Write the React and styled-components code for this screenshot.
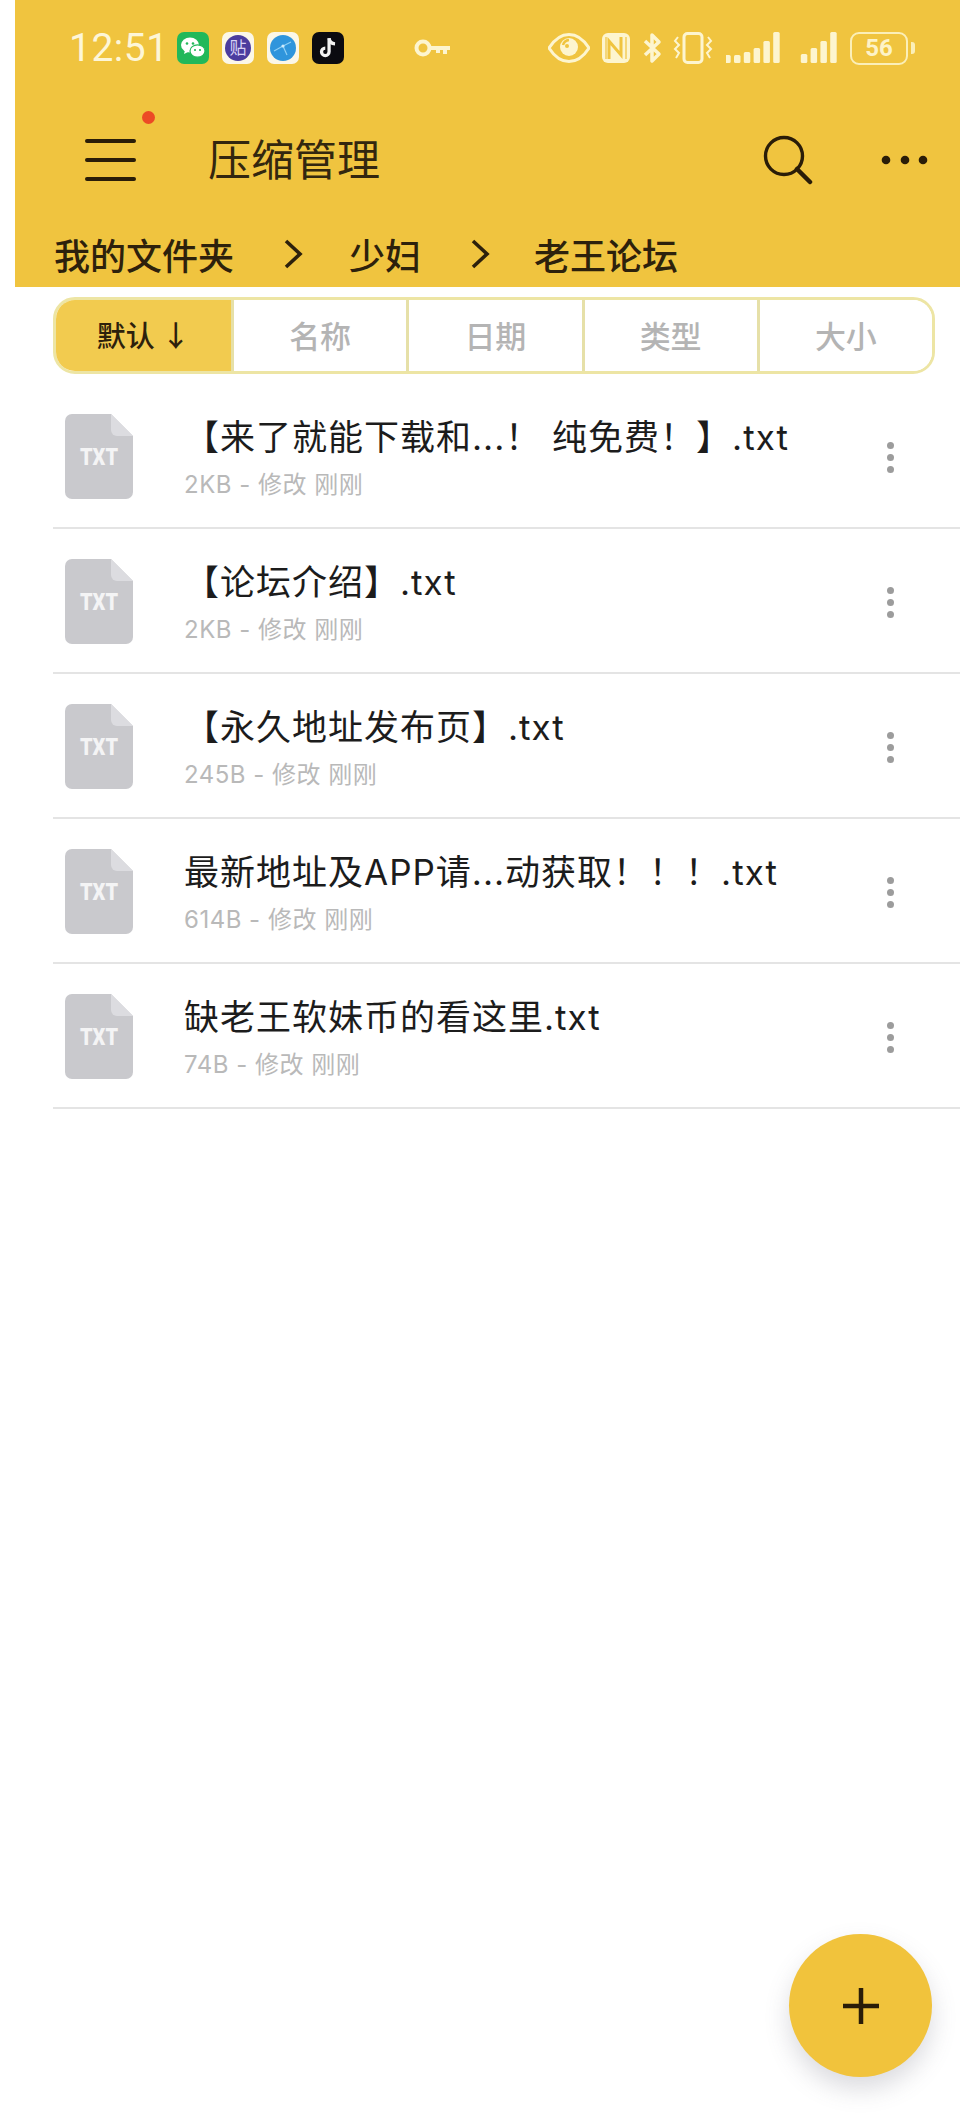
import React from "react";
import styled, { createGlobalStyle } from "styled-components";

const Y = "#F0C43F";
const CJK = `"Noto Sans CJK SC", "Noto Sans", sans-serif`;
const MIX = `"Inter", "Noto Sans CJK SC", sans-serif`;

const Global = createGlobalStyle`
  html, body { margin: 0; padding: 0; background: #fff; }
  body { font-family: ${CJK}; }
`;

const Page = styled.div`
  position: relative;
  width: 960px;
  height: 2118px;
  overflow: hidden;
  background: #fff;
`;
const Header = styled.header`
  margin-left: 15px;
  height: 287px;
  background: ${Y};
  display: flex;
  flex-direction: column;
`;
const StatusBar = styled.div`
  height: 96px;
  display: flex;
  align-items: center;
  padding-left: 54px;
  color: #fff8dc;
`;
const Time = styled.span`
  font: 400 39px/1 "Roboto", sans-serif;
  letter-spacing: 0.5px;
  width: 108px;
  flex: none;
  color: #fdf6d8;
`;
const AppIcons = styled.div`
  display: flex;
  align-items: center;
  gap: 13px;
  width: 371px;
  flex: none;
`;
const AppIconBox = styled.div`
  width: 32px;
  height: 32px;
  flex: none;
  border-radius: 7px;
  background: ${p => p.$bg};
  display: flex;
  align-items: center;
  justify-content: center;
  overflow: hidden;
`;
const Sys = styled.div`
  display: flex;
  align-items: center;
  flex: none;
  margin-left: ${p => p.$ml}px;
`;
const BatteryBody = styled.div`
  margin-left: 12px;
  width: 58px;
  height: 33px;
  flex: none;
  box-sizing: border-box;
  border: 2px solid #fbeFB8;
  border-radius: 9px;
  display: flex;
  align-items: center;
  justify-content: center;
  font: 700 24px/1 "Roboto", sans-serif;
  color: #fdf3c8;
`;
const BatteryNub = styled.div`
  width: 4px;
  height: 12px;
  margin-left: 3px;
  flex: none;
  border-radius: 0 3px 3px 0;
  background: #fbeFB8;
`;
const Toolbar = styled.div`
  height: 128px;
  display: flex;
  align-items: center;
  padding-left: 70px;
`;
const Menu = styled.div`
  position: relative;
  width: 51px;
  height: 42px;
  display: flex;
  flex-direction: column;
  justify-content: space-between;
`;
const MenuLine = styled.span`
  display: block;
  height: 4px;
  border-radius: 2px;
  background: #2a1d08;
`;
const RedDot = styled.span`
  position: absolute;
  left: 57px;
  top: -28px;
  width: 13px;
  height: 13px;
  border-radius: 50%;
  background: #EC4A25;
`;
const Title = styled.h1`
  margin: -5px 0 0 72px;
  font: 400 43px/1 ${CJK};
  color: #33270f;
  flex: 1;
`;
const ToolIcons = styled.div`
  display: flex;
  align-items: center;
  padding-right: 31px;
  gap: 68px;
`;
const Crumbs = styled.nav`
  display: flex;
  align-items: center;
  height: 61px;
  padding: 0 0 2px 39px;
  box-sizing: border-box;
`;
const Crumb = styled.span`
  font: 500 36px/1 ${CJK};
  color: #2d210c;
`;
const Chevron = styled.svg`
  width: 20px;
  height: 32px;
  margin: 0 ${p => p.$mr}px 0 ${p => p.$ml}px;
`;
const Tabs = styled.div`
  margin: 10px 25px 0 53px;
  height: 77px;
  box-sizing: border-box;
  border: 3px solid #EDE5A4;
  border-radius: 22px;
  display: grid;
  grid-template-columns: 175px 1fr 1fr 1fr 1fr;
  overflow: hidden;
`;
const Tab = styled.div`
  display: flex;
  align-items: center;
  justify-content: center;
  padding-bottom: 3px;
  font: 500 ${p => (p.$active ? 29 : 31)}px/1 ${CJK};
  color: ${p => (p.$active ? "#2d210c" : "#b4b4b4")};
  background: ${p => (p.$active ? "#F2CB4F" : "#fff")};
  border-left: ${p => (p.$first ? "none" : "3px solid #E6E0A8")};
`;
const List = styled.ul`
  list-style: none;
  margin: 10px 0 0 53px;
  padding: 0;
`;
const Row = styled.li`
  height: 145px;
  box-sizing: border-box;
  border-bottom: 2px solid #e4e4e4;
  padding: 30px 66px 0 12px;
  display: flex;
  align-items: flex-start;
`;
const FileSvg = styled.svg`
  width: 68px;
  height: 86px;
  flex: none;
`;
const Info = styled.div`
  margin: 0 0 0 51px;
  flex: 1;
  min-width: 0;
`;
const Name = styled.div`
  font: 400 35px/46px ${MIX};
  letter-spacing: 1px;
  color: #1c1c1c;
  white-space: nowrap;
`;
const Meta = styled.div`
  margin-top: 7px;
  font: 400 24px/36px ${MIX};
  letter-spacing: 0.5px;
  color: #b9b9b9;
  white-space: nowrap;
`;
const More = styled.div`
  margin-top: 28px;
  display: flex;
  flex-direction: column;
  gap: 5px;
`;
const MoreDot = styled.span`
  width: 7px;
  height: 7px;
  border-radius: 50%;
  background: #9c9c9c;
`;
const Fab = styled.button`
  position: absolute;
  left: 789px;
  top: 1934px;
  width: 143px;
  height: 143px;
  border: none;
  padding: 0;
  border-radius: 50%;
  background: #F1C33C;
  box-shadow: 0 12px 24px rgba(90, 90, 110, 0.22);
  display: flex;
  align-items: center;
  justify-content: center;
`;

const files = [
  ["【来了就能下载和...！ 纯免费！】.txt", "2KB - 修改 刚刚"],
  ["【论坛介绍】.txt", "2KB - 修改 刚刚"],
  ["【永久地址发布页】.txt", "245B - 修改 刚刚"],
  ["最新地址及APP请...动获取！！！.txt", "614B - 修改 刚刚"],
  ["缺老王软妹币的看这里.txt", "74B - 修改 刚刚"],
];
const tabs = ["默认 ↓", "名称", "日期", "类型", "大小"];

const W = "#fdf5cf";

const FileIcon = () => (
  <FileSvg viewBox="0 0 68 86">
    <path d="M7 0H46L68 22V78a7 7 0 0 1-7 7H7a7 7 0 0 1-7-7V7a7 7 0 0 1 7-7Z" fill="#c9c9cd" />
    <path d="M46 0L68 22H52a6 6 0 0 1-6-6Z" fill="#dcdce0" />
    <text x="34" y="51" textAnchor="middle" fontFamily="Roboto, sans-serif" fontWeight="900" fontSize="23" fill="#f4f4f5" textLength="38" lengthAdjust="spacingAndGlyphs">TXT</text>
  </FileSvg>
);

const Wechat = () => (
  <svg width="28" height="28" viewBox="0 0 28 28">
    <ellipse cx="11" cy="11" rx="9" ry="7.5" fill="#fff" />
    <path d="M6 16l-1 4 5-2.5Z" fill="#fff" />
    <ellipse cx="18.5" cy="17" rx="7.5" ry="6.2" fill="#fff" stroke="#22B85A" strokeWidth="1.2" />
    <circle cx="8" cy="9.5" r="1.3" fill="#22B85A" />
    <circle cx="14" cy="9.5" r="1.3" fill="#22B85A" />
    <circle cx="16" cy="16" r="1.1" fill="#22B85A" />
    <circle cx="21" cy="16" r="1.1" fill="#22B85A" />
  </svg>
);
const Tie = () => (
  <svg width="30" height="30" viewBox="0 0 30 30">
    <circle cx="15" cy="15" r="13" fill="#4B3C9E" />
    <text x="15" y="21" textAnchor="middle" fontSize="17" fontFamily={CJK} fill="#d9d2f5">贴</text>
  </svg>
);
const Globe = () => (
  <svg width="30" height="30" viewBox="0 0 30 30">
    <circle cx="15" cy="15" r="13" fill="#2F95DC" />
    <path d="M6 18L15 13L23 9M15 13L19 22" stroke="#8fd0f5" strokeWidth="1.2" fill="none" />
    <circle cx="15" cy="13" r="1.6" fill="#cdeafb" />
  </svg>
);
const Tiktok = () => (
  <svg width="26" height="26" viewBox="0 0 24 24">
    <path d="M13 3v12.5a3.5 3.5 0 1 1-3.5-3.5" fill="none" stroke="#f2f2f2" strokeWidth="3" />
    <path d="M13 3c.4 3 2.5 5 5.5 5.2" fill="none" stroke="#f2f2f2" strokeWidth="3" />
  </svg>
);
const Key = () => (
  <svg width="37" height="22" viewBox="0 0 37 22">
    <circle cx="9" cy="11" r="6.5" fill="none" stroke={W} strokeWidth="4" />
    <path d="M15 9H36V13H33V17H29V13H26V16H22V13H15Z" fill={W} />
  </svg>
);
const Eye = () => (
  <svg width="42" height="30" viewBox="0 0 42 30">
    <path d="M1 15C8 4 15 1.500 21 1.500S34 4 41 15C34 26 27 28.500 21 28.500S8 26 1 15Z" fill="none" stroke={W} strokeWidth="3" />
    <circle cx="21" cy="14" r="9" fill={W} />
    <path d="M15 12a7 7 0 0 1 6-5" stroke={Y} strokeWidth="2.500" fill="none" />
    <circle cx="19" cy="13" r="2" fill={Y} />
  </svg>
);
const Nfc = () => (
  <svg width="30" height="32" viewBox="0 0 30 32">
    <path d="M7 1H23a6 6 0 0 1 6 6V25a6 6 0 0 1-6 6H7a6 6 0 0 1-6-6V7a6 6 0 0 1 6-6Z" fill={W} />
    <path d="M8 27V9L20 23V5" fill="none" stroke={Y} strokeWidth="3" />
    <path d="M5 5V27M25 5V27" stroke={Y} strokeWidth="1.200" />
  </svg>
);
const Bluetooth = () => (
  <svg width="22" height="32" viewBox="0 0 22 32">
    <path d="M3 9L17 22L10 29V3L17 10L3 23" fill="none" stroke={W} strokeWidth="3.500" strokeLinejoin="round" />
  </svg>
);
const Vibrate = () => (
  <svg width="40" height="32" viewBox="0 0 40 32">
    <rect x="11" y="1.500" width="18" height="29" rx="3.500" fill="none" stroke={W} strokeWidth="3" />
    <path d="M5 5L2 9L6 13L2 17L6 21L3 26M35 5L38 9L34 13L38 17L34 21L37 26" fill="none" stroke={W} strokeWidth="2" />
  </svg>
);
const Signal = ({ hs, w }) => (
  <svg width={w} height="32" viewBox={`0 0 ${w} 32`}>
    {hs.map((h, i) => (
      <rect key={i} x={w - (hs.length - i) * 9.800 + 2} y={31 - h} width="6.500" height={h} rx="1.500" fill={W} />
    ))}
  </svg>
);
const Search = () => (
  <svg width="50" height="50" viewBox="0 0 50 50">
    <circle cx="21" cy="21" r="18.500" fill="none" stroke="#2a1d08" strokeWidth="3.400" />
    <path d="M34 34L47 47" stroke="#2a1d08" strokeWidth="4.500" strokeLinecap="round" />
  </svg>
);
const Dots = () => (
  <svg width="48" height="12" viewBox="0 0 48 12">
    <circle cx="5" cy="6" r="4.300" fill="#2a1d08" />
    <circle cx="24" cy="6" r="4.300" fill="#2a1d08" />
    <circle cx="42" cy="6" r="4.300" fill="#2a1d08" />
  </svg>
);
const Chev = ({ ml, mr }) => (
  <Chevron $ml={ml} $mr={mr} viewBox="0 0 20 32">
    <path d="M3 3L17 16L3 29" fill="none" stroke="#2d210c" strokeWidth="3.600" />
  </Chevron>
);
const Plus = () => (
  <svg width="38" height="38" viewBox="0 0 38 38">
    <path d="M19 1V37M1 19H37" stroke="#2a1d08" strokeWidth="4.500" />
  </svg>
);

export default function App() {
  return (
    <Page>
      <Global />
      <Header>
        <StatusBar>
          <Time>12:51</Time>
          <AppIcons>
            <AppIconBox $bg="#22B85A"><Wechat /></AppIconBox>
            <AppIconBox $bg="#FBF7E8"><Tie /></AppIconBox>
            <AppIconBox $bg="#FBF7E8"><Globe /></AppIconBox>
            <AppIconBox $bg="#0b0b10"><Tiktok /></AppIconBox>
            <Sys $ml={57}><Key /></Sys>
          </AppIcons>
          <Sys $ml={0}>
            <Sys $ml={0}><Eye /></Sys>
            <Sys $ml={11}><Nfc /></Sys>
            <Sys $ml={11}><Bluetooth /></Sys>
            <Sys $ml={9}><Vibrate /></Sys>
            <Sys $ml={13}><Signal w={55} hs={[8, 8, 11, 15, 22, 31]} /></Sys>
            <Sys $ml={17}><Signal w={40} hs={[9, 15, 22, 31]} /></Sys>
            <BatteryBody>56</BatteryBody>
            <BatteryNub />
          </Sys>
        </StatusBar>
        <Toolbar>
          <Menu>
            <MenuLine />
            <MenuLine />
            <MenuLine />
            <RedDot />
          </Menu>
          <Title>压缩管理</Title>
          <ToolIcons>
            <Search />
            <Dots />
          </ToolIcons>
        </Toolbar>
        <Crumbs>
          <Crumb>我的文件夹</Crumb>
          <Chev ml={49} mr={46} />
          <Crumb>少妇</Crumb>
          <Chev ml={49} mr={44} />
          <Crumb>老王论坛</Crumb>
        </Crumbs>
      </Header>
      <Tabs>
        {tabs.map((t, i) => (
          <Tab key={t} $active={i === 0} $first={i === 0}>{t}</Tab>
        ))}
      </Tabs>
      <List>
        {files.map(([n, m]) => (
          <Row key={n}>
            <FileIcon />
            <Info>
              <Name>{n}</Name>
              <Meta>{m}</Meta>
            </Info>
            <More>
              <MoreDot />
              <MoreDot />
              <MoreDot />
            </More>
          </Row>
        ))}
      </List>
      <Fab aria-label="add"><Plus /></Fab>
    </Page>
  );
}
